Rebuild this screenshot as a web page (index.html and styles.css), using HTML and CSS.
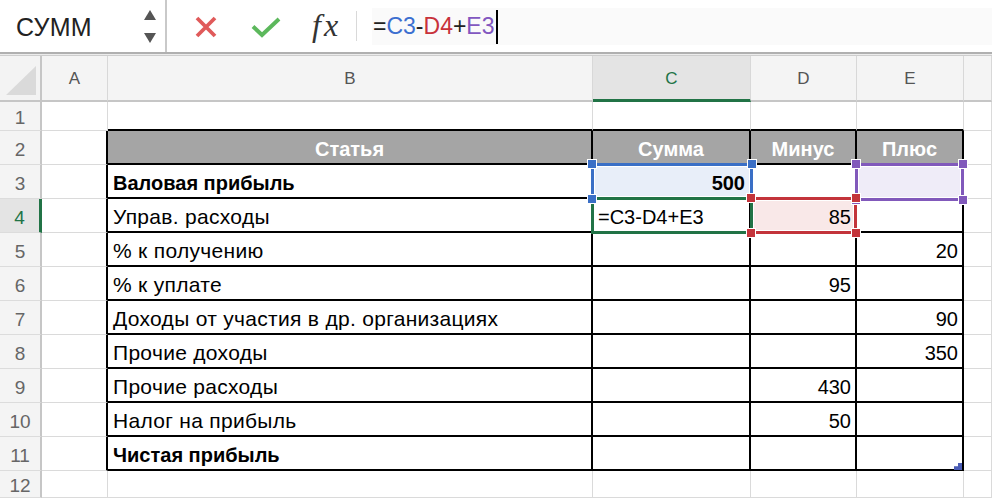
FILE: index.html
```html
<!DOCTYPE html>
<html lang="ru">
<head>
<meta charset="utf-8">
<title>Excel</title>
<link rel="stylesheet" href="styles.css">
</head>
<body>
<div class="fbar">
  <div class="namebox">
    <span class="name">СУММ</span>
    <div class="spin"><span class="up"></span><span class="down"></span></div>
  </div>
  <svg class="ic-x" width="22" height="22" viewBox="0 0 22 22"><path d="M2 2 L20 20 M20 2 L2 20" stroke="#e05a5a" stroke-width="3.8" fill="none"/></svg>
  <svg class="ic-ok" width="30" height="22" viewBox="0 0 30 22"><path d="M2 10.5 L11 19 L28 3" stroke="#5cb85c" stroke-width="4" fill="none"/></svg>
  <span class="fx">fx</span>
  <span class="fdiv"></span>
  <div class="formula">=<span class="rb">C3</span>-<span class="rr">D4</span>+<span class="rp">E3</span><span class="caret"></span></div>
</div>
<div class="sep"></div>
<div class="sheet">
  <!-- header -->
  <div class="corner"><span class="tri"></span></div>
  <div class="ch">A</div>
  <div class="ch">B</div>
  <div class="ch sel">C</div>
  <div class="ch">D</div>
  <div class="ch">E</div>
  <div class="ch"></div>
  <!-- row 1 -->
  <div class="rh">1</div>
  <div class="c"></div>
  <div class="c ta"></div>
  <div class="c ta"></div>
  <div class="c ta"></div>
  <div class="c ta"></div>
  <div class="c"></div>
  <!-- row 2 -->
  <div class="rh">2</div>
  <div class="c tl"></div>
  <div class="c t hd">Статья</div>
  <div class="c t hd">Сумма</div>
  <div class="c t hd">Минус</div>
  <div class="c t hd">Плюс</div>
  <div class="c"></div>
  <!-- row 3 -->
  <div class="rh">3</div>
  <div class="c tl"></div>
  <div class="c t b">Валовая прибыль</div>
  <div class="c t num b fill-blue">500</div>
  <div class="c t"></div>
  <div class="c t fill-purple"></div>
  <div class="c"></div>
  <!-- row 4 -->
  <div class="rh sel">4</div>
  <div class="c tl"></div>
  <div class="c t txt">Управ. расходы</div>
  <div class="c t">=C3-D4+E3</div>
  <div class="c t num fill-red">85</div>
  <div class="c t"></div>
  <div class="c"></div>
  <!-- row 5 -->
  <div class="rh">5</div>
  <div class="c tl"></div>
  <div class="c t txt">% к получению</div>
  <div class="c t"></div>
  <div class="c t"></div>
  <div class="c t num">20</div>
  <div class="c"></div>
  <!-- row 6 -->
  <div class="rh">6</div>
  <div class="c tl"></div>
  <div class="c t txt">% к уплате</div>
  <div class="c t"></div>
  <div class="c t num">95</div>
  <div class="c t"></div>
  <div class="c"></div>
  <!-- row 7 -->
  <div class="rh">7</div>
  <div class="c tl"></div>
  <div class="c t txt">Доходы от участия в др. организациях</div>
  <div class="c t"></div>
  <div class="c t"></div>
  <div class="c t num">90</div>
  <div class="c"></div>
  <!-- row 8 -->
  <div class="rh">8</div>
  <div class="c tl"></div>
  <div class="c t txt">Прочие доходы</div>
  <div class="c t"></div>
  <div class="c t"></div>
  <div class="c t num">350</div>
  <div class="c"></div>
  <!-- row 9 -->
  <div class="rh">9</div>
  <div class="c tl"></div>
  <div class="c t txt">Прочие расходы</div>
  <div class="c t"></div>
  <div class="c t num">430</div>
  <div class="c t"></div>
  <div class="c"></div>
  <!-- row 10 -->
  <div class="rh">10</div>
  <div class="c tl"></div>
  <div class="c t txt">Налог на прибыль</div>
  <div class="c t"></div>
  <div class="c t num">50</div>
  <div class="c t"></div>
  <div class="c"></div>
  <!-- row 11 -->
  <div class="rh">11</div>
  <div class="c tl"></div>
  <div class="c t b">Чистая прибыль</div>
  <div class="c t"></div>
  <div class="c t"></div>
  <div class="c t"></div>
  <div class="c"></div>
  <!-- row 12 -->
  <div class="rh">12</div>
  <div class="c"></div>
  <div class="c"></div>
  <div class="c"></div>
  <div class="c"></div>
  <div class="c"></div>
  <div class="c"></div>

  <!-- range overlays -->
  <div class="ov ov-blue"><span class="h tl-h"></span><span class="h tr-h"></span><span class="h bl-h"></span></div>
  <div class="ov ov-purple"><span class="h tl-h"></span><span class="h tr-h"></span><span class="h bl-h"></span><span class="h br-h"></span></div>
  <div class="ov ov-red"><span class="h tl-h"></span><span class="h tr-h"></span><span class="h bl-h"></span><span class="h br-h"></span></div>
  <div class="ov ov-green"></div>
  <div class="marker"></div>
</div>
</body>
</html>
```
FILE: styles.css
```css
* { box-sizing: border-box; }
html, body { margin: 0; padding: 0; background: #fff; overflow: hidden; }
body { width: 992px; height: 498px; font-family: "Liberation Sans", Arial, sans-serif; color: #000; }

/* formula bar */
.fbar { height: 52px; display: flex; align-items: center; background: #fff; }
.namebox {
  width: 167px; height: 52px; flex: none;
  border-right: 2px solid #c9c9c9;
  display: flex; align-items: center; justify-content: space-between;
  padding: 2px 9px 0 16px;
}
.name { font-size: 25px; color: #222; letter-spacing: 0.3px; }
.spin { display: flex; flex-direction: column; gap: 13px; margin-top: -1px; }
.up, .down { display: block; width: 0; height: 0; border-left: 6.5px solid transparent; border-right: 6.5px solid transparent; }
.up { border-bottom: 10px solid #555; }
.down { border-top: 10px solid #555; }
.ic-x { flex: none; margin-left: 28px; margin-top: 1px; }
.ic-ok { flex: none; margin-left: 34px; margin-top: 2px; }
.fx {
  flex: none; width: 30px; margin-left: 31px;
  font-family: "Liberation Serif", "Times New Roman", serif; font-style: italic;
  font-size: 32px; color: #333; margin-top: -2px; letter-spacing: 3px;
}
.fdiv { flex: none; width: 1px; height: 30px; background: #d9d9d9; margin-left: 14px; }
.formula {
  flex: 1; height: 37px; margin-left: 15px; margin-top: 1px;
  background: #fafafa; display: flex; align-items: center;
  font-size: 23px; color: #222; padding-left: 1px;
}
.rb { color: #3c6fd0; }
.rr { color: #c8323a; }
.rp { color: #8257c0; }
.caret { display: inline-block; width: 2px; height: 34px; background: #000; margin-left: 1px; }

.sep { height: 4px; border-top: 2px solid #b0b0b0; border-bottom: 1px solid #cdcdcd; background: #ececec; }

/* sheet */
.sheet {
  position: relative;
  height: 442px;
  display: grid;
  grid-template-columns: 42px 66px 485px 158px 106px 107px 1fr;
  grid-template-rows: 46px 29px repeat(10, 34px) 1fr;
  font-size: 20px;
}
.corner {
  background: #f3f3f3; border-right: 2px solid #c6c6c6; border-bottom: 2px solid #c6c6c6;
  display: flex; align-items: flex-end; justify-content: flex-end; padding: 0 4px 5px 0;
}
.tri { width: 30px; height: 29px; background: #dadada; clip-path: polygon(100% 0, 100% 100%, 0 100%); }
.ch {
  background: #f4f4f4; border-right: 1px solid #d8d8d8; border-bottom: 2px solid #c6c6c6;
  display: flex; align-items: center; justify-content: center;
  font-size: 17px; color: #555; padding-top: 2px;
}
.ch.sel { background: #e4e4e4; color: #217346; border-bottom: 3px solid #217346; }
.rh {
  background: #f4f4f4; border-right: 2px solid #c6c6c6; border-bottom: 1px solid #dcdcdc;
  display: flex; align-items: center; justify-content: center;
  font-size: 19px; color: #666; padding-top: 4px;
}
.rh.sel { background: #e4e4e4; color: #217346; border-right: 3px solid #217346; }

.c {
  border-right: 1px solid #dadada; border-bottom: 1px solid #dadada;
  padding: 3px 5px 0 5px; line-height: 30px; white-space: nowrap; overflow: visible;
}
.txt { font-size: 21px; letter-spacing: 0.3px; }
.t { border-right: 2px solid #000; border-bottom: 2px solid #000; }
.tl { border-right: 2px solid #000; }
.ta { border-bottom: 2px solid #000; }
.hd { background: #a5a5a5; color: #fff; font-weight: bold; text-align: center; }
.b { font-weight: bold; }
.num { text-align: right; padding-right: 4px; }
.fill-blue { background: #e8eef9; }
.fill-red { background: #f9e8e8; }
.fill-purple { background: #efecf8; }

/* overlays for referenced ranges */
.ov { position: absolute; border: 3px solid; box-shadow: inset 0 0 0 1px #fff; }
.ov-blue { grid-area: 4 / 4 / 5 / 5; left: -2px; top: -2px; right: -2px; bottom: -1px; border-color: #3a6fc6; }
.ov-purple { grid-area: 4 / 6 / 5 / 7; left: -2px; top: -2px; right: 0; bottom: -2px; border-color: #8159bb; }
.ov-red { grid-area: 5 / 5 / 6 / 6; left: -1px; top: -2px; right: 0; bottom: -1px; border-color: #c3343b; }
.ov-green { grid-area: 5 / 4 / 6 / 5; left: -2px; top: -2px; right: -2px; bottom: -1px; border-color: #217346; box-shadow: none; }
.ov-blue .h { background: #3a6fc6; }
.ov-purple .h { background: #8159bb; }
.ov-red .h { background: #c3343b; }
.h { position: absolute; z-index: 2; width: 10px; height: 10px; border: 1px solid #fff; }
.tl-h { left: -7px; top: -7px; }
.tr-h { right: -7px; top: -7px; }
.bl-h { left: -7px; bottom: -7px; }
.br-h { right: -7px; bottom: -7px; }

.marker {
  position: absolute; grid-area: 12 / 6 / 13 / 7; right: 2px; bottom: 1px;
  width: 8px; height: 7px; background: #4a5cb5;
  clip-path: polygon(50% 0, 100% 0, 100% 100%, 0 100%, 0 45%, 50% 45%);
}
```
